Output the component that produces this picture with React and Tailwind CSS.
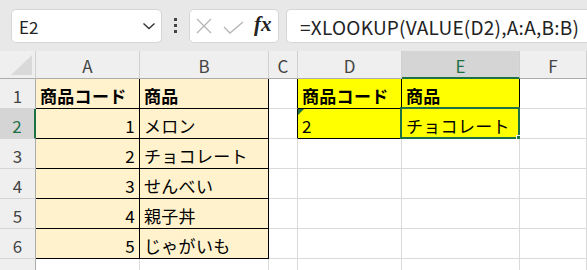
import React from "react";

const JP = { fontFamily: '"Noto Sans CJK JP", "Noto Sans", sans-serif' };

const GRID = "#dadada";
const BLACK = "#000000";

// column header letters
const COLS = ["A", "B", "C", "D", "E", "F"];

// rows of cells
const ROWS = [
  [
    { t: "商品コード", bold: true, bg: "bg-[#fff2cc]", r: BLACK, b: BLACK },
    { t: "商品", bold: true, bg: "bg-[#fff2cc]", r: BLACK, b: BLACK },
    { t: "", r: BLACK },
    { t: "商品コード", bold: true, bg: "bg-[#ffff00]", r: BLACK, b: BLACK },
    { t: "商品", bold: true, bg: "bg-[#ffff00]", r: BLACK, b: BLACK },
    { t: "" },
  ],
  [
    { t: "1", right: true, bg: "bg-[#fff2cc]", r: BLACK, b: BLACK },
    { t: "メロン", bg: "bg-[#fff2cc]", r: BLACK, b: BLACK },
    { t: "", r: BLACK },
    { t: "2", bg: "bg-[#ffff00]", r: BLACK, b: BLACK, tri: true },
    { t: "チョコレート", bg: "bg-[#ffff00]", r: BLACK, b: BLACK, sel: true },
    { t: "" },
  ],
  [
    { t: "2", right: true, bg: "bg-[#fff2cc]", r: BLACK, b: BLACK },
    { t: "チョコレート", bg: "bg-[#fff2cc]", r: BLACK, b: BLACK },
    { t: "" }, { t: "" }, { t: "" }, { t: "" },
  ],
  [
    { t: "3", right: true, bg: "bg-[#fff2cc]", r: BLACK, b: BLACK },
    { t: "せんべい", bg: "bg-[#fff2cc]", r: BLACK, b: BLACK },
    { t: "" }, { t: "" }, { t: "" }, { t: "" },
  ],
  [
    { t: "4", right: true, bg: "bg-[#fff2cc]", r: BLACK, b: BLACK },
    { t: "親子丼", bg: "bg-[#fff2cc]", r: BLACK, b: BLACK },
    { t: "" }, { t: "" }, { t: "" }, { t: "" },
  ],
  [
    { t: "5", right: true, bg: "bg-[#fff2cc]", r: BLACK, b: BLACK },
    { t: "じゃがいも", bg: "bg-[#fff2cc]", r: BLACK, b: BLACK },
    { t: "" }, { t: "" }, { t: "" }, { t: "" },
  ],
  [{ t: "" }, { t: "" }, { t: "" }, { t: "" }, { t: "" }, { t: "" }],
];

function Cell({ c }) {
  return (
    <div
      className={`relative h-[30px] flex items-center px-[4px] text-[17px] text-black border-r border-b ${c.bg || "bg-white"} ${c.right ? "justify-end" : "justify-start"} ${c.bold ? "font-bold" : ""}`}
      style={{ borderRightColor: c.r || GRID, borderBottomColor: c.b || GRID }}
    >
      {c.tri && (
        <div className="absolute left-0 top-0 w-0 h-0 border-t-[6px] border-r-[6px] border-t-[#1e7145] border-r-transparent" />
      )}
      <span className="whitespace-nowrap leading-none pt-[3px] tracking-[0.3px]">{c.t}</span>
      {c.sel && (
        <>
          <div className="absolute -left-[2px] -top-[2px] -right-[1px] -bottom-[1px] border-2 border-[#1e7145]" />
          <div className="absolute -right-[4px] -bottom-[4px] w-[7px] h-[7px] bg-[#1e7145] border border-white" />
        </>
      )}
    </div>
  );
}

export default function App() {
  return (
    <div className="w-[587px] h-[270px] overflow-hidden bg-white" style={JP}>
      {/* Formula bar */}
      <div className="h-[51px] bg-[#e8e8e8] flex items-center pl-[11px]">
        <div className="w-[151px] h-[34px] bg-white rounded-[5px] border border-[#d6d6d6] flex items-center justify-between pl-[7px] pr-[5px]">
          <span className="text-[17px] text-[#222] leading-none pt-[2px]">E2</span>
          <svg width="14" height="10" viewBox="0 0 14 10" fill="none">
            <path d="M1.5 2.5 L7 7.5 L12.5 2.5" stroke="#333" strokeWidth="1.4" />
          </svg>
        </div>
        <div className="w-[27px] flex flex-col items-center gap-[3px]">
          <div className="w-[3px] h-[3px] bg-[#444]" />
          <div className="w-[3px] h-[3px] bg-[#444]" />
          <div className="w-[3px] h-[3px] bg-[#444]" />
        </div>
        <div className="w-[90px] h-[34px] bg-white rounded-[5px] border border-[#d6d6d6] flex items-center pl-[6px]">
          <svg width="16" height="16" viewBox="0 0 16 16" fill="none">
            <path d="M1 1 L15 15 M15 1 L1 15" stroke="#b5b5b5" strokeWidth="1.3" />
          </svg>
          <svg width="21" height="13" viewBox="0 0 21 13" fill="none" className="ml-[11px] mt-[3px]">
            <path d="M1 6 L7 12 L20 1" stroke="#b5b5b5" strokeWidth="1.3" />
          </svg>
          <span
            className="ml-[10px] italic font-bold text-[21px] text-[#222] leading-none -mt-[2px]"
            style={{ fontFamily: '"Liberation Serif", serif' }}
          >
            fx
          </span>
        </div>
        <div className="ml-[7px] flex-1 h-[34px] bg-white rounded-l-[5px] border border-r-0 border-[#d6d6d6] flex items-center pl-[13px]">
          <span className="text-[19px] text-[#222] leading-none whitespace-nowrap pt-[2px] tracking-[0.25px]">
            =XLOOKUP(VALUE(D2),A:A,B:B)
          </span>
        </div>
      </div>

      {/* Sheet grid */}
      <div className="grid grid-cols-[36px_104px_129px_29px_104px_118px_1fr]">
        {/* select-all corner */}
        <div className="h-[28px] bg-[#efefef] border-r border-b border-r-[#d0d0d0] border-b-[#acacac] flex items-end justify-end p-[3px]">
          <svg width="21" height="20" viewBox="0 0 21 20">
            <path d="M21 0 L21 20 L0 20 Z" fill="#d9d9d9" />
          </svg>
        </div>
        {COLS.map((l) => {
          const sel = l === "E";
          return (
            <div
              key={l}
              className={`h-[28px] flex items-center justify-center text-[17px] leading-none pt-[2px] border-r border-r-[#d0d0d0] ${sel ? "bg-[#d5d5d5] text-[#1e7145] border-b-2 border-b-[#1e7145]" : "bg-[#efefef] text-[#444] border-b border-b-[#acacac]"}`}
            >
              {l}
            </div>
          );
        })}

        {ROWS.map((row, i) => {
          const sel = i === 1;
          return (
            <React.Fragment key={i}>
              <div
                className={`h-[30px] flex items-center justify-center text-[17px] leading-none pt-[3px] border-b border-b-[#d5d5d5] ${sel ? "bg-[#d5d5d5] text-[#1e7145] border-r-2 border-r-[#1e7145]" : "bg-[#efefef] text-[#444] border-r border-r-[#acacac]"}`}
              >
                {i + 1}
              </div>
              {row.map((c, j) => (
                <Cell key={j} c={c} />
              ))}
            </React.Fragment>
          );
        })}
      </div>
    </div>
  );
}
